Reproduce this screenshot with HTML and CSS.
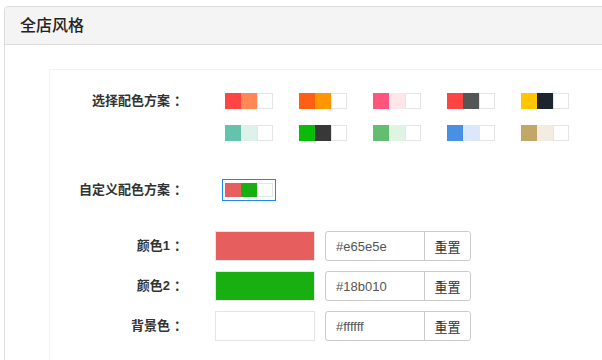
FILE: index.html
```html
<!DOCTYPE html>
<html lang="zh-CN">
<head>
    <meta charset="UTF-8">
    <title>全店风格</title>
    <link rel="stylesheet" href="styles.css">
</head>
<body>
    <div class="panel">
        <div class="panel-heading">全店风格</div>
        <div class="panel-body">
            <div class="style-box">
                <div class="form-row scheme-row">
                    <label class="form-label">选择配色方案<span class="colon">：</span></label>
                    <div class="scheme-grid">
                        <span class="scheme"><i style="background:#ff4544"></i><i style="background:#ff8855"></i><i class="blank"></i></span>
                        <span class="scheme"><i style="background:#ff5e15"></i><i style="background:#ff9600"></i><i class="blank"></i></span>
                        <span class="scheme"><i style="background:#ff547b"></i><i style="background:#ffe6e8"></i><i class="blank"></i></span>
                        <span class="scheme"><i style="background:#ff4444"></i><i style="background:#555555"></i><i class="blank"></i></span>
                        <span class="scheme"><i style="background:#ffc600"></i><i style="background:#1d262e"></i><i class="blank"></i></span>
                        <span class="scheme"><i style="background:#63c4ab"></i><i style="background:#dcf2ea"></i><i class="blank"></i></span>
                        <span class="scheme"><i style="background:#0abb0a"></i><i style="background:#383838"></i><i class="blank"></i></span>
                        <span class="scheme"><i style="background:#63be72"></i><i style="background:#e1f4e3"></i><i class="blank"></i></span>
                        <span class="scheme"><i style="background:#4a90e2"></i><i style="background:#dbe8f9"></i><i class="blank"></i></span>
                        <span class="scheme"><i style="background:#c3a769"></i><i style="background:#f3ede1"></i><i class="blank"></i></span>
                    </div>
                </div>

                <div class="form-row custom-row">
                    <label class="form-label">自定义配色方案<span class="colon">：</span></label>
                    <div class="custom-scheme">
                        <span class="scheme small"><i style="background:#e65e5e"></i><i style="background:#18b010"></i><i class="blank"></i></span>
                    </div>
                </div>

                <div class="form-row color-row">
                    <label class="form-label">颜色1<span class="colon">：</span></label>
                    <span class="color-preview" style="background:#e65e5e"></span>
                    <div class="input-group">
                        <input type="text" class="color-input" value="#e65e5e">
                        <button class="reset-btn">重置</button>
                    </div>
                </div>
                <div class="form-row color-row">
                    <label class="form-label">颜色2<span class="colon">：</span></label>
                    <span class="color-preview" style="background:#18b010"></span>
                    <div class="input-group">
                        <input type="text" class="color-input" value="#18b010">
                        <button class="reset-btn">重置</button>
                    </div>
                </div>
                <div class="form-row color-row">
                    <label class="form-label">背景色<span class="colon">：</span></label>
                    <span class="color-preview" style="background:#ffffff"></span>
                    <div class="input-group">
                        <input type="text" class="color-input" value="#ffffff">
                        <button class="reset-btn">重置</button>
                    </div>
                </div>
            </div>
        </div>
    </div>
</body>
</html>
```

FILE: styles.css
```css
body {
    margin: 0;
    font-family: "Liberation Sans", "Noto Sans CJK SC", sans-serif;
    color: #333;
    background-color: #fff;
    overflow: hidden;
}

.panel {
    margin: 6px 0 0 4px;
    width: 700px;
    border: 1px solid #ddd;
    border-radius: 4px;
}

.panel-heading {
    height: 37px;
    line-height: 37px;
    padding-left: 15px;
    font-size: 16px;
    font-weight: 500;
    color: #222;
    background-color: #f4f4f4;
    border-bottom: 1px solid #ddd;
    border-radius: 4px 4px 0 0;
}

.panel-body {
    padding: 24px 0 20px 44px;
}

.style-box {
    border: 1px solid #f2f2f2;
    padding: 23px 0 20px 0;
}

.form-row {
    display: flex;
    align-items: flex-start;
}

.form-label {
    width: 137px;
    text-align: right;
    font-size: 13px;
    font-weight: bold;
    color: #333;
    flex-shrink: 0;
}

.form-label .colon {
    padding-left: 4px;
}

.scheme-row .form-label {
    line-height: 16px;
}

.scheme-grid {
    margin-left: 38px;
    display: grid;
    grid-template-columns: repeat(5, 48px);
    column-gap: 26px;
    row-gap: 16px;
}

.scheme {
    display: flex;
    height: 16px;
}

.scheme i {
    display: block;
    width: 16px;
    height: 16px;
    box-sizing: border-box;
}

.scheme i.blank {
    background: #fff;
    border: 1px solid #e5e5e5;
}

.custom-row {
    margin-top: 38px;
    align-items: center;
}

.custom-row .form-label {
    line-height: 22px;
}

.custom-scheme {
    margin-left: 35px;
    border: 1px solid #1e88f0;
    padding: 3px 2px;
}

.scheme.small {
    height: 14px;
}

.scheme.small i {
    height: 14px;
}

.color-row {
    align-items: center;
    margin-top: 10px;
}

.custom-row + .color-row {
    margin-top: 30px;
}

.color-row .form-label {
    line-height: 30px;
}

.color-preview {
    margin-left: 28px;
    width: 100px;
    height: 30px;
    box-sizing: border-box;
    border: 1px solid #e5e5e5;
}

.input-group {
    margin-left: 10px;
    display: flex;
    height: 30px;
    border: 1px solid #ccc;
    border-radius: 3px;
    box-sizing: border-box;
}

.color-input {
    width: 99px;
    border: none;
    border-right: 1px solid #ccc;
    padding: 0 10px;
    box-sizing: border-box;
    font-family: "Liberation Sans", sans-serif;
    font-size: 13px;
    color: #555;
    background: transparent;
    outline: none;
}

.reset-btn {
    width: 45px;
    border: none;
    background: #fff;
    border-radius: 0 3px 3px 0;
    font-family: "Liberation Sans", "Noto Sans CJK SC", sans-serif;
    font-size: 13px;
    color: #333;
    padding: 0;
    cursor: pointer;
}
```
